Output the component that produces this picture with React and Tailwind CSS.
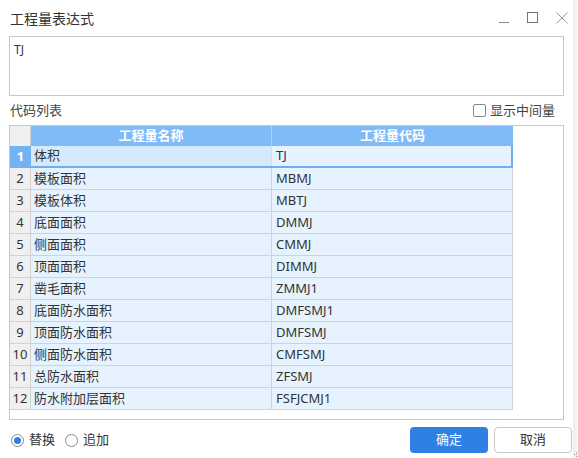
import React from 'react';

const rows = [
  ['体积', 'TJ'],
  ['模板面积', 'MBMJ'],
  ['模板体积', 'MBTJ'],
  ['底面面积', 'DMMJ'],
  ['侧面面积', 'CMMJ'],
  ['顶面面积', 'DIMMJ'],
  ['凿毛面积', 'ZMMJ1'],
  ['底面防水面积', 'DMFSMJ1'],
  ['顶面防水面积', 'DMFSMJ'],
  ['侧面防水面积', 'CMFSMJ'],
  ['总防水面积', 'ZFSMJ'],
  ['防水附加层面积', 'FSFJCMJ1'],
];

const font = { fontFamily: '"Noto Sans", "Noto Sans CJK SC", sans-serif' };

const App = () => {
  return (
    <div className="w-[578px] h-[458px] bg-white flex text-[#333]" style={font}>
      <div className="w-[573px] flex flex-col">
        {/* Title bar */}
        <div className="h-[36px] flex items-center justify-between pl-[10px] pr-[3px]">
          <span className="text-[14px] text-[#333]">工程量表达式</span>
          <div className="flex items-center gap-[13px] text-[#777]">
            <svg width="16" height="16" viewBox="0 0 16 16">
              <path d="M3 12.5h10" stroke="#888" strokeWidth="1" />
            </svg>
            <svg width="16" height="16" viewBox="0 0 16 16">
              <rect x="2.5" y="2.5" width="10" height="10" fill="none" stroke="#777" strokeWidth="1" />
            </svg>
            <svg width="16" height="16" viewBox="0 0 16 16">
              <path d="M2.5 2.5l11 11M13.5 2.5l-11 11" stroke="#999" strokeWidth="1" />
            </svg>
          </div>
        </div>

        {/* Expression box */}
        <div className="mx-[9px] h-[60px] border border-[#c8c8c8] px-[4px] pt-[4px] text-[12px] text-[#3a2a5a]">
          TJ
        </div>

        {/* Label row */}
        <div className="h-[29px] flex items-center justify-between pl-[10px] pr-[18px]">
          <span className="text-[13px] text-[#444]">代码列表</span>
          <label className="flex items-center gap-[4px] text-[13px] text-[#444]">
            <span className="w-[13px] h-[13px] border border-[#888] rounded-[2px] bg-white"></span>
            显示中间量
          </label>
        </div>

        {/* Table */}
        <div className="mx-[9px] h-[295px] border border-[#c8c8c8] flex flex-col">
          <div className="flex h-[20px]">
            <div className="w-[21px] bg-[#f0f0f0] border-r border-[#d2d2d2]"></div>
            <div className="w-[241px] bg-[#80bbf8] border-r border-[#a9d0fb] flex items-center justify-center text-white font-bold text-[13px]">
              工程量名称
            </div>
            <div className="w-[241px] bg-[#80bbf8] flex items-center justify-center text-white font-bold text-[13px]">
              工程量代码
            </div>
          </div>
          {rows.map(([name, code], i) => {
            const selected = i === 0;
            return (
              <div key={code} className="flex h-[22px] text-[13px]">
                <div
                  className={
                    selected
                      ? 'w-[21px] bg-[#73b2f4] text-white font-bold flex items-center justify-center border-b border-[#73b2f4]'
                      : 'w-[21px] bg-[#f0f0f0] border-r border-b border-[#d2d2d2] flex items-center justify-center'
                  }
                >
                  {i + 1}
                </div>
                {selected ? (
                  <div className="flex border-b-2 border-r-2 border-[#6eaef1]">
                    <div className="w-[241px] bg-[#d6eafd] border-r border-[#cfdff0] flex items-center pl-[3px]">{name}</div>
                    <div className="w-[239px] bg-[#e6f3fe] flex items-center pl-[4px] text-[#3a2a5a]">{code}</div>
                  </div>
                ) : (
                  <>
                    <div className="w-[241px] bg-[#e6f3fe] border-r border-b border-[#d2d2d2] flex items-center pl-[3px]">{name}</div>
                    <div className="w-[241px] bg-[#e6f3fe] border-r border-b border-[#d2d2d2] flex items-center pl-[4px]">{code}</div>
                  </>
                )}
              </div>
            );
          })}
        </div>

        {/* Footer */}
        <div className="flex items-center justify-between pl-[11px] pr-[1px] mt-[7px]">
          <div className="flex items-center text-[13px] text-[#333]">
            <span className="w-[13px] h-[13px] rounded-full border border-[#8a8a8a] flex items-center justify-center">
              <span className="w-[7px] h-[7px] rounded-full bg-[#2f80e2]"></span>
            </span>
            <span className="ml-[5px]">替换</span>
            <span className="ml-[10px] w-[13px] h-[13px] rounded-full border border-[#8a8a8a]"></span>
            <span className="ml-[5px]">追加</span>
          </div>
          <div className="flex gap-[6px]">
            <button className="w-[78px] h-[26px] rounded-[4px] bg-[#2f80e2] text-white text-[13px]">确定</button>
            <button className="w-[78px] h-[26px] rounded-[4px] bg-white border border-[#c8c8c8] text-[#333] text-[13px]">取消</button>
          </div>
        </div>
      </div>
      <div className="w-[5px] bg-gradient-to-r from-[#ededed] to-[#f7f7f7] flex flex-col justify-end">
        <svg width="5" height="6" viewBox="0 0 5 6">
          <rect x="3" y="0" width="1" height="1" fill="#999" />
          <rect x="1" y="2" width="1" height="1" fill="#999" />
          <rect x="3" y="2" width="1" height="1" fill="#999" />
          <rect x="3" y="4" width="1" height="1" fill="#999" />
        </svg>
      </div>
    </div>
  );
};

export default App;
